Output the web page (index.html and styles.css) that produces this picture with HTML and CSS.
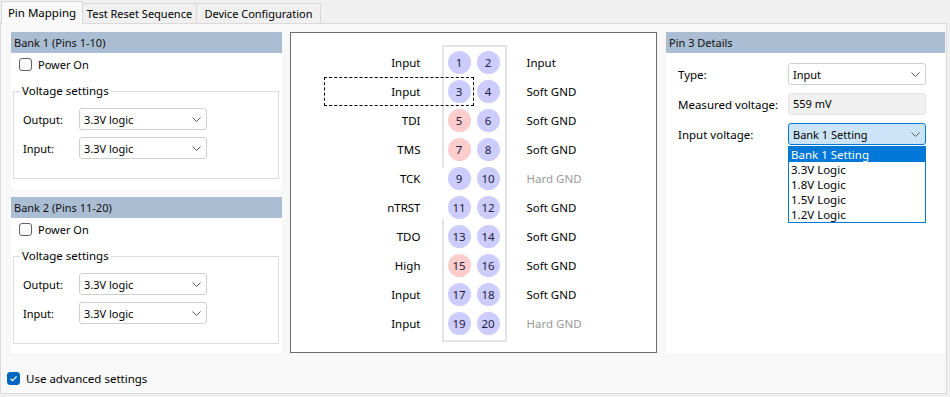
FILE: index.html
```html
<!DOCTYPE html>
<html>
<head>
<meta charset="utf-8">
<title>Pin Mapping</title>
<link rel="stylesheet" href="styles.css">
</head>
<body>
<div class="window">
  <div class="tabs">
    <div class="tab active tab-pin">Pin Mapping</div>
    <div class="tab tab-reset">Test Reset Sequence</div>
    <div class="tab tab-device">Device Configuration</div>
  </div>
  <div class="page">
    <div class="columns">
      <div class="left-col">
        <section class="panel bank bank1">
          <div class="panel-head">Bank 1 (Pins 1-10)</div>
          <div class="panel-body">
            <div class="check-row"><span class="cb"></span><span>Power On</span></div>
            <fieldset class="group">
              <legend>Voltage settings</legend>
              <div class="form-row"><span class="lbl">Output:</span><div class="combo"><span>3.3V logic</span><svg class="chev" width="9" height="5" viewBox="0 0 9 5"><path d="M0.5 0.5 L4.5 4.5 L8.5 0.5"/></svg></div></div>
              <div class="form-row"><span class="lbl">Input:</span><div class="combo"><span>3.3V logic</span><svg class="chev" width="9" height="5" viewBox="0 0 9 5"><path d="M0.5 0.5 L4.5 4.5 L8.5 0.5"/></svg></div></div>
            </fieldset>
          </div>
        </section>
        <section class="panel bank bank2">
          <div class="panel-head">Bank 2 (Pins 11-20)</div>
          <div class="panel-body">
            <div class="check-row"><span class="cb"></span><span>Power On</span></div>
            <fieldset class="group">
              <legend>Voltage settings</legend>
              <div class="form-row"><span class="lbl">Output:</span><div class="combo"><span>3.3V logic</span><svg class="chev" width="9" height="5" viewBox="0 0 9 5"><path d="M0.5 0.5 L4.5 4.5 L8.5 0.5"/></svg></div></div>
              <div class="form-row"><span class="lbl">Input:</span><div class="combo"><span>3.3V logic</span><svg class="chev" width="9" height="5" viewBox="0 0 9 5"><path d="M0.5 0.5 L4.5 4.5 L8.5 0.5"/></svg></div></div>
            </fieldset>
          </div>
        </section>
      </div>

      <div class="diagram">
        <div class="labels labels-left">
          <div class="pl">Input</div>
          <div class="pl">Input</div>
          <div class="pl">TDI</div>
          <div class="pl">TMS</div>
          <div class="pl">TCK</div>
          <div class="pl">nTRST</div>
          <div class="pl">TDO</div>
          <div class="pl">High</div>
          <div class="pl">Input</div>
          <div class="pl">Input</div>
        </div>
        <div class="connector">
          <div class="pins">
            <div class="cell"><span class="pin">1</span></div><div class="cell"><span class="pin">2</span></div>
            <div class="cell"><span class="pin">3</span></div><div class="cell"><span class="pin">4</span></div>
            <div class="cell"><span class="pin hot">5</span></div><div class="cell"><span class="pin">6</span></div>
            <div class="cell"><span class="pin hot">7</span></div><div class="cell"><span class="pin">8</span></div>
            <div class="cell"><span class="pin">9</span></div><div class="cell"><span class="pin">10</span></div>
            <div class="cell"><span class="pin">11</span></div><div class="cell"><span class="pin">12</span></div>
            <div class="cell"><span class="pin">13</span></div><div class="cell"><span class="pin">14</span></div>
            <div class="cell"><span class="pin hot">15</span></div><div class="cell"><span class="pin">16</span></div>
            <div class="cell"><span class="pin">17</span></div><div class="cell"><span class="pin">18</span></div>
            <div class="cell"><span class="pin">19</span></div><div class="cell"><span class="pin">20</span></div>
          </div>
        </div>
        <div class="labels labels-right">
          <div class="pl">Input</div>
          <div class="pl">Soft GND</div>
          <div class="pl">Soft GND</div>
          <div class="pl">Soft GND</div>
          <div class="pl muted">Hard GND</div>
          <div class="pl">Soft GND</div>
          <div class="pl">Soft GND</div>
          <div class="pl">Soft GND</div>
          <div class="pl">Soft GND</div>
          <div class="pl muted">Hard GND</div>
        </div>
        <div class="focus-rect"></div>
      </div>

      <section class="panel details">
        <div class="panel-head">Pin 3 Details</div>
        <div class="panel-body details-body">
          <div class="field-row"><span class="flbl">Type:</span><div class="combo wide"><span>Input</span><svg class="chev" width="9" height="5" viewBox="0 0 9 5"><path d="M0.5 0.5 L4.5 4.5 L8.5 0.5"/></svg></div></div>
          <div class="field-row"><span class="flbl">Measured voltage:</span><div class="readonly">559 mV</div></div>
          <div class="field-row"><span class="flbl">Input voltage:</span>
            <div class="combo-wrap">
              <div class="combo wide focused"><span>Bank 1 Setting</span><svg class="chev" width="9" height="5" viewBox="0 0 9 5"><path d="M0.5 0.5 L4.5 4.5 L8.5 0.5"/></svg></div>
              <ul class="popup">
                <li class="sel">Bank 1 Setting</li>
                <li>3.3V Logic</li>
                <li>1.8V Logic</li>
                <li>1.5V Logic</li>
                <li>1.2V Logic</li>
              </ul>
            </div>
          </div>
        </div>
      </section>
    </div>
    <div class="advanced"><span class="cb checked"><svg width="11" height="11" viewBox="0 0 11 11"><path d="M2.5 5.6 L4.6 7.7 L8.6 3.4"/></svg></span><span>Use advanced settings</span></div>
  </div>
</div>
</body>
</html>
```
FILE: styles.css
```css
* { box-sizing: border-box; }

html, body {
  margin: 0;
  padding: 0;
}

body {
  width: 950px;
  height: 397px;
  background: #f0f0f0;
  font-family: "Noto Sans", "Open Sans", sans-serif;
  font-size: 11px;
  color: #000;
  overflow: hidden;
}

.window {
  width: 950px;
}

/* Tabs */
.tabs {
  display: flex;
  align-items: flex-end;
  height: 23px;
  padding-left: 1px;
}

.tab {
  height: 20px;
  line-height: 19px;
  text-align: center;
  background: #f0f0f0;
  border: 1px solid #d9d9d9;
  border-bottom: none;
  border-left: none;
  white-space: nowrap;
}

.tab.active {
  position: relative;
  z-index: 1;
  height: 23px;
  margin-bottom: -1px;
  line-height: 22px;
  background: #f9f9f9;
  border-left: 1px solid #d9d9d9;
  font-size: 11.5px;
}

.tab-pin { width: 82px; }
.tab-reset { width: 114px; }
.tab-device { width: 124px; }

/* Page */
.page {
  width: 947px;
  height: 371px;
  background: #f8f8f8;
  border: 1px solid #dadada;
  padding: 8px 0 0 6px;
}

.columns {
  display: flex;
  height: 321px;
  margin-left: 4px;
}

.left-col {
  width: 271px;
  display: flex;
  flex-direction: column;
  gap: 7px;
}

.panel {
  display: flex;
  flex-direction: column;
  background: #fff;
}

.panel-head {
  height: 21px;
  line-height: 21px;
  padding-left: 3px;
  background: #aabdd2;
  color: #111;
}

.bank1 { height: 158px; }
.bank2 { flex: 1; }

.panel-body {
  flex: 1;
  background: #fff;
}

.bank .panel-body {
  padding-top: 4px;
}

.check-row {
  display: flex;
  align-items: center;
  height: 15px;
  padding-left: 8px;
  gap: 6px;
}

.cb {
  display: inline-flex;
  align-items: center;
  justify-content: center;
  width: 13px;
  height: 13px;
  border: 1px solid #616161;
  border-radius: 3px;
  background: #fbfbfb;
  flex: none;
}

.cb.checked {
  background: #0067c0;
  border-color: #0067c0;
}

.cb.checked path {
  fill: none;
  stroke: #fff;
  stroke-width: 1.2;
}

.group {
  margin: 11px 3px 0 2px;
  padding: 9px 0 19px 6px;
  border: 1px solid #dcdcdc;
  min-width: 0;
}

.group legend {
  padding: 0 2px;
  line-height: 16px;
  font-size: 11.5px;
}

.form-row {
  display: flex;
  align-items: center;
  height: 22px;
  margin-left: 3px;
}

.form-row + .form-row {
  margin-top: 7px;
}

.lbl {
  width: 56px;
}

.combo {
  display: flex;
  align-items: center;
  justify-content: space-between;
  width: 128px;
  height: 22px;
  padding: 0 5px 0 4px;
  background: #fff;
  border: 1px solid #cfcfcf;
  border-radius: 3px;
}

.combo.wide {
  width: 138px;
}

.combo.focused {
  background: #cce4f7;
  border-color: #0078d7;
}

.chev path {
  fill: none;
  stroke: #5a5a5a;
  stroke-width: 1;
}

/* Diagram */
.diagram {
  position: relative;
  display: flex;
  align-items: flex-start;
  width: 367px;
  margin-left: 8px;
  padding-top: 12px;
  background: #fff;
  border: 1px solid #6b6b6b;
}

.labels {
  flex: 1;
  padding-top: 3px;
}

.labels-left {
  text-align: right;
  padding-right: 21px;
}

.labels-right {
  padding-left: 20px;
}

.pl {
  height: 29px;
  line-height: 29px;
  white-space: nowrap;
  font-size: 11.5px;
}

.pl.muted {
  color: #9a9a9a;
}

.connector {
  position: relative;
  width: 65px;
  border: 2px solid #e4e4e4;
  padding: 1px 2px 2px 1px;
}

.connector::before {
  content: "";
  position: absolute;
  left: -2px;
  top: 121px;
  width: 2px;
  height: 51px;
  background: #fff;
}

.pins {
  display: grid;
  grid-template-columns: 29px 29px;
  grid-auto-rows: 29px;
}

.cell {
  display: flex;
  align-items: center;
  justify-content: center;
}

.pin {
  display: flex;
  align-items: center;
  justify-content: center;
  width: 23px;
  height: 23px;
  border-radius: 50%;
  background: #ccccfd;
  color: #1c1c3c;
  font-size: 11.5px;
}

.pin.hot {
  background: #fdcccc;
}

.focus-rect {
  position: absolute;
  left: 33px;
  top: 44px;
  width: 150px;
  height: 29px;
  border: 1px dashed #000;
}

/* Details */
.details {
  width: 279px;
  margin-left: 9px;
}

.details-body {
  padding: 10px 0 0 12px;
}

.field-row {
  display: flex;
  align-items: center;
  height: 22px;
  margin-bottom: 8px;
}

.flbl {
  width: 110px;
  font-size: 11.5px;
}

.readonly {
  width: 138px;
  height: 22px;
  line-height: 20px;
  padding-left: 4px;
  background: #f0f0f0;
  border: 1px solid #e6e6e6;
  border-radius: 3px;
}

.combo-wrap {
  position: relative;
}

.popup {
  position: absolute;
  left: 0;
  top: 23px;
  width: 138px;
  margin: 0;
  padding: 0;
  list-style: none;
  background: #fff;
  border: 1px solid #0078d7;
  z-index: 5;
}

.popup li {
  height: 15px;
  line-height: 15px;
  padding-left: 2px;
  font-size: 11.5px;
}

.popup li.sel {
  background: #0078d7;
  color: #fff;
}

/* Bottom */
.advanced {
  display: flex;
  align-items: center;
  gap: 6px;
  height: 15px;
  margin-top: 18px;
  font-size: 11.5px;
}
```
